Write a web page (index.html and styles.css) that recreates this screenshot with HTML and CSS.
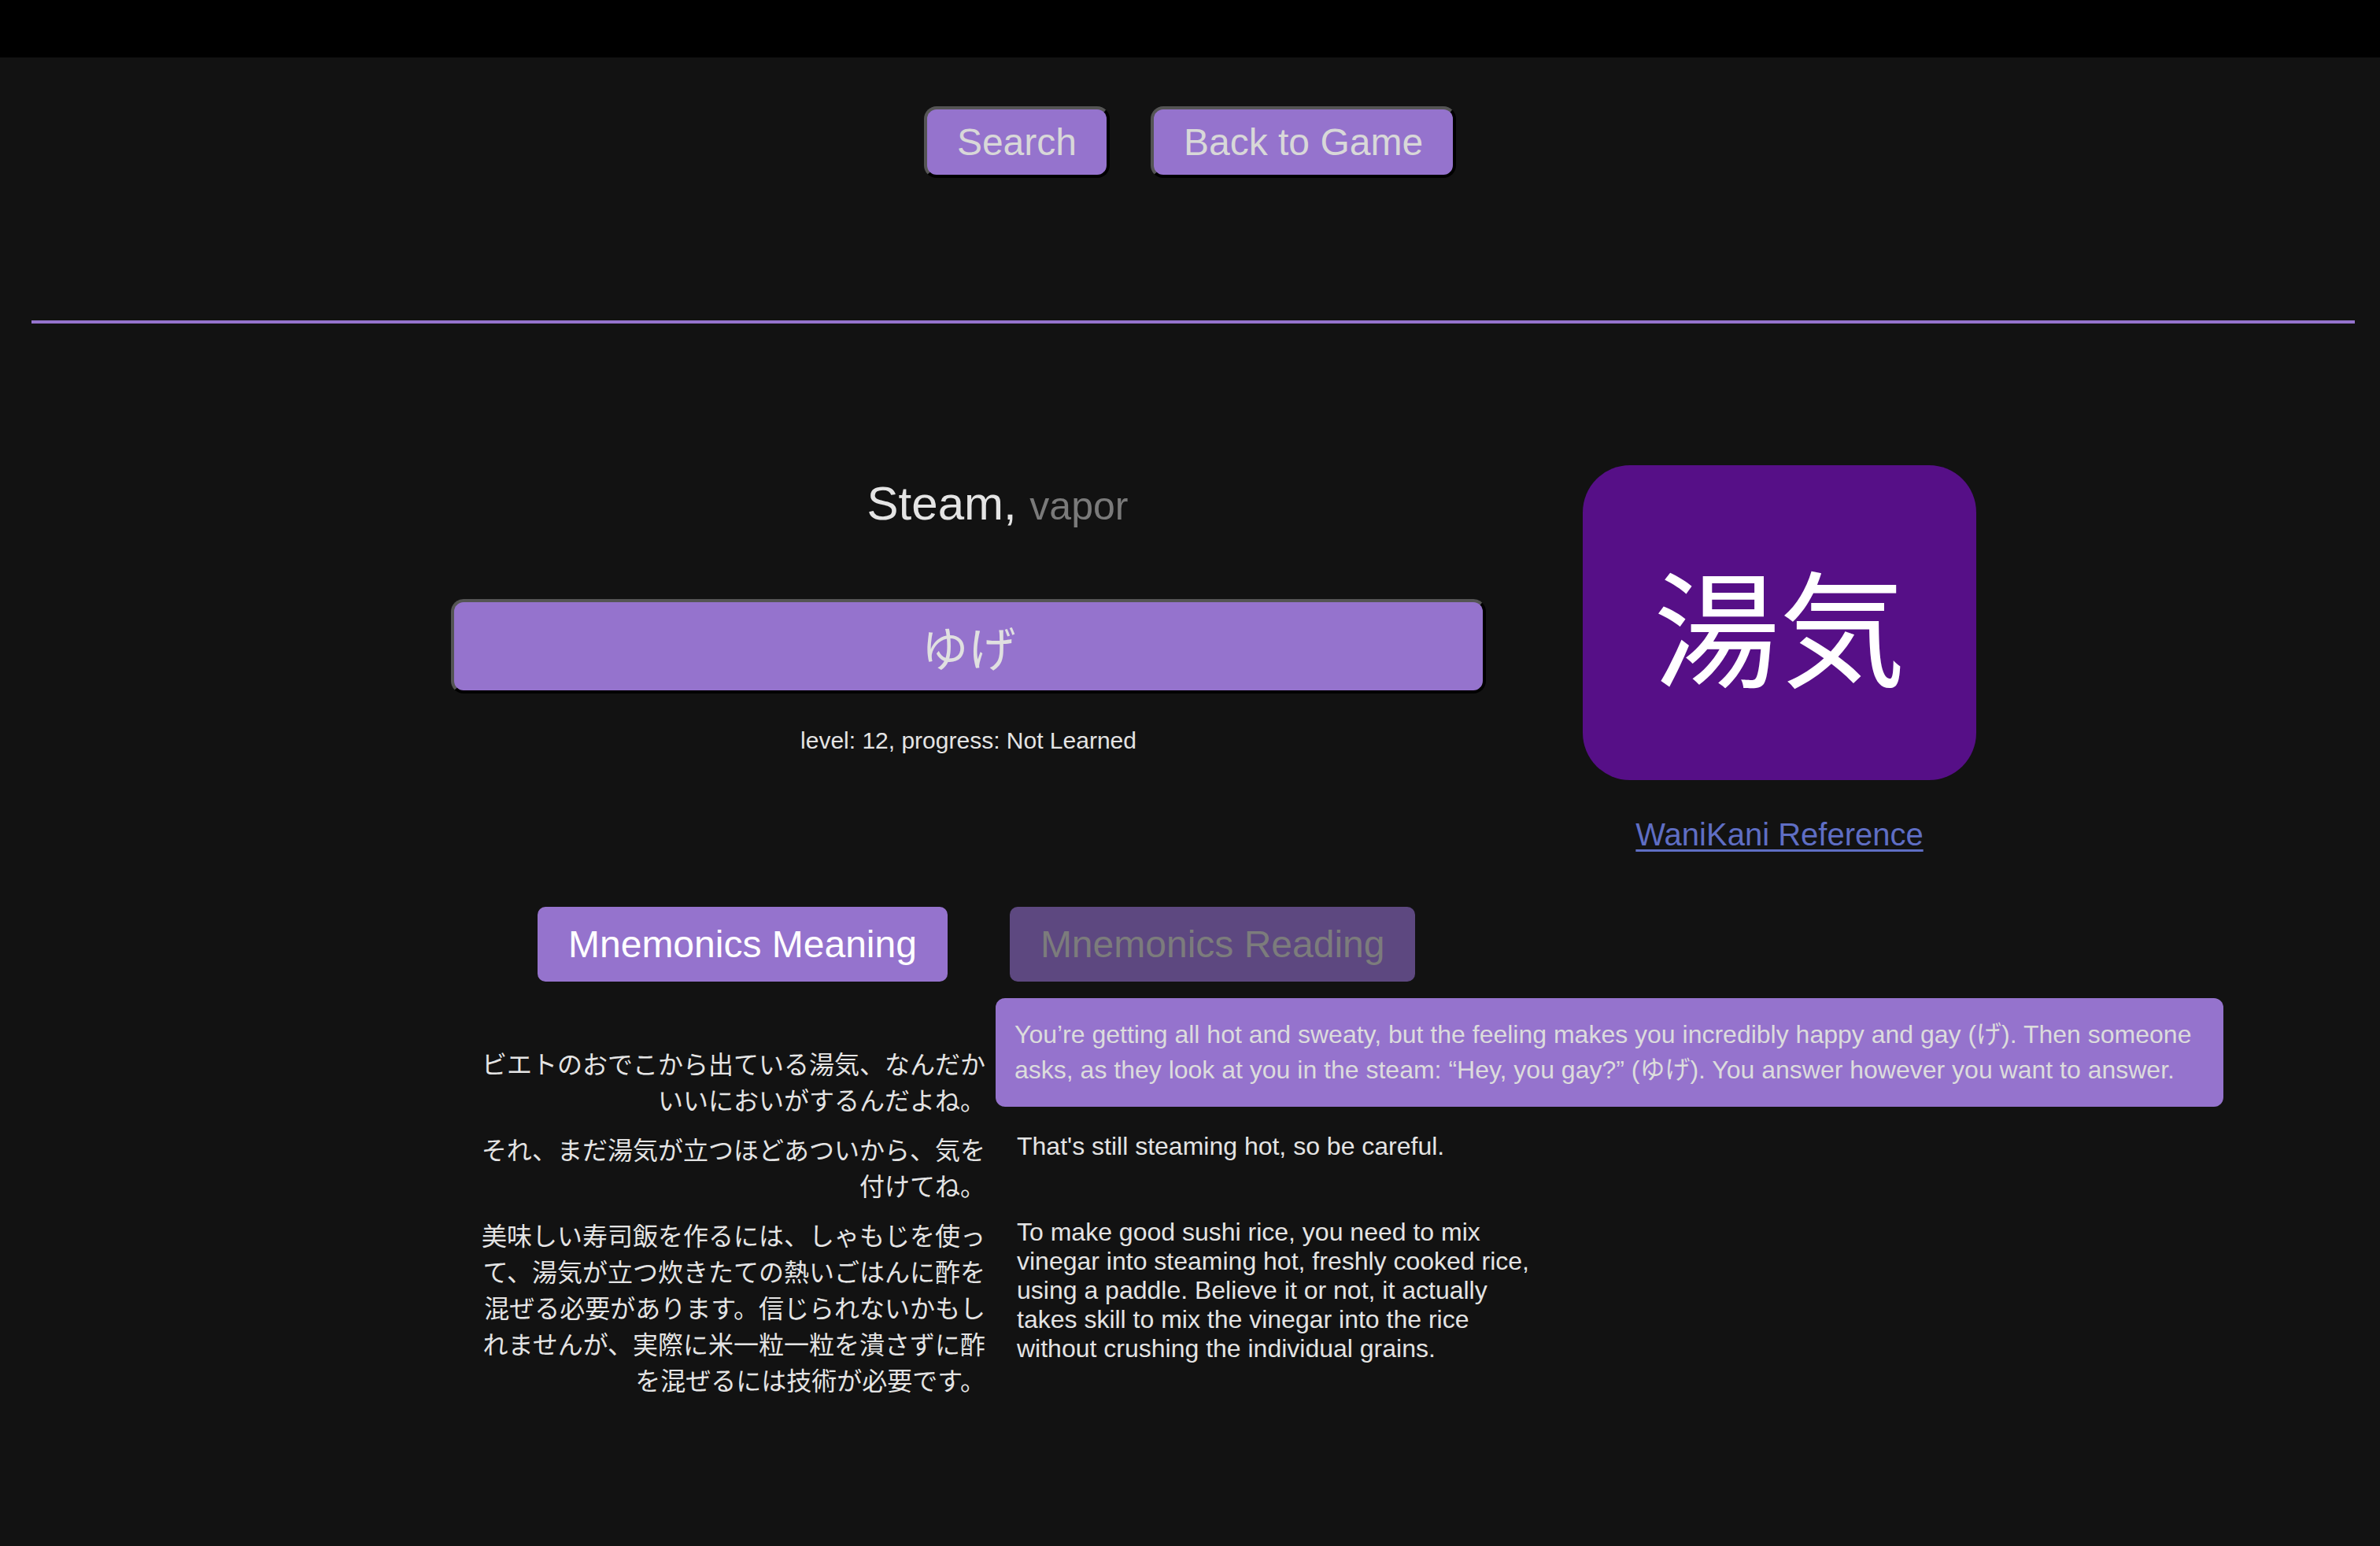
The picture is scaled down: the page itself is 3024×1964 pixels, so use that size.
FILE: index.html
```html
<!DOCTYPE html>
<html lang="ja">
<head>
<meta charset="utf-8">
<title>湯気 - Steam</title>
<link rel="stylesheet" href="styles.css">
</head>
<body>
<header class="topbar"></header>
<nav class="actions">
  <button class="btn">Search</button>
  <button class="btn">Back to Game</button>
</nav>
<hr class="divider">
<main>
  <section class="card-row">
    <div class="word-info">
      <h1 class="meaning">Steam, <span class="alt">vapor</span></h1>
      <div class="reading">ゆげ</div>
      <p class="meta">level: 12, progress: Not Learned</p>
    </div>
    <div class="kanji-col">
      <div class="kanji-box">湯気</div>
      <a class="ref-link" href="#">WaniKani Reference</a>
    </div>
  </section>
  <section class="mnemonics">
    <div class="tabs">
      <button class="tab active">Mnemonics Meaning</button>
      <button class="tab muted">Mnemonics Reading</button>
    </div>
    <div class="popup">You’re getting all hot and sweaty, but the feeling makes you incredibly happy and gay (げ). Then someone asks, as they look at you in the steam: “Hey, you gay?” (ゆげ). You answer however you want to answer.</div>
    <div class="sentences">
      <p class="ja">ビエトのおでこから出ている湯気、なんだかいいにおいがするんだよね。</p>
      <p class="en"></p>
      <p class="ja">それ、まだ湯気が立つほどあついから、気を付けてね。</p>
      <p class="en">That's still steaming hot, so be careful.</p>
      <p class="ja">美味しい寿司飯を作るには、しゃもじを使って、湯気が立つ炊きたての熱いごはんに酢を混ぜる必要があります。信じられないかもしれませんが、実際に米一粒一粒を潰さずに酢を混ぜるには技術が必要です。</p>
      <p class="en">To make good sushi rice, you need to mix vinegar into steaming hot, freshly cooked rice, using a paddle. Believe it or not, it actually takes skill to mix the vinegar into the rice without crushing the individual grains.</p>
    </div>
  </section>
</main>
</body>
</html>
```
FILE: styles.css
```css
html, body {
  margin: 0;
  padding: 0;
}
body {
  background: #121212;
  color: #e2e2e2;
  font-family: "Liberation Sans", Arial, "Noto Sans CJK JP", sans-serif;
  min-height: 1964px;
}
.topbar {
  height: 73px;
  background: #000;
}
.actions {
  display: flex;
  justify-content: center;
  gap: 52px;
  padding-top: 62px;
}
.btn {
  font-family: "Liberation Sans", Arial, sans-serif;
  font-size: 48px;
  line-height: 55px;
  padding: 14px 38px;
  color: #d8d8d8;
  background: #9573cd;
  border: 4px solid;
  border-color: #555 #000 #000 #555;
  border-radius: 16px;
}
.divider {
  margin: 181px 32px 0 40px;
  height: 4px;
  border: 0;
  background: #9573cd;
}
.card-row {
  display: flex;
  align-items: flex-start;
  gap: 123px;
  padding-left: 573px;
  margin-top: 180px;
}
.word-info {
  width: 1315px;
  padding-top: 14px;
}
.meaning {
  margin: 0;
  padding-left: 74px;
  text-align: center;
  font-size: 60px;
  line-height: 69px;
  font-weight: normal;
  color: #e4e4e4;
}
.meaning .alt {
  font-size: 50px;
  color: #7a7a7a;
}
.reading {
  box-sizing: border-box;
  margin-top: 83px;
  width: 1315px;
  height: 120px;
  line-height: 112px;
  text-align: center;
  font-family: "Noto Sans CJK JP", sans-serif;
  font-size: 60px;
  color: #e0e0e0;
  background: #9573cd;
  border: 4px solid;
  border-color: #555 #000 #000 #555;
  border-radius: 16px;
}
.meta {
  margin: 43px 0 0;
  text-align: center;
  font-size: 30px;
  line-height: 34px;
  color: #e4e4e4;
}
.kanji-col {
  width: 500px;
  display: flex;
  flex-direction: column;
  align-items: center;
}
.kanji-box {
  width: 500px;
  height: 400px;
  border-radius: 60px;
  background: #560f87;
  color: #fff;
  display: flex;
  align-items: center;
  justify-content: center;
  font-family: "Noto Sans CJK JP", sans-serif;
  font-size: 160px;
  line-height: 1;
}
.ref-link {
  margin-top: 46px;
  font-size: 40px;
  line-height: 46px;
  color: #5f6ec4;
  text-decoration: underline;
  text-decoration-thickness: 3px;
  text-underline-offset: 5px;
}
.mnemonics {
  position: relative;
  margin-top: 69px;
}
.tabs {
  display: flex;
  gap: 79px;
  padding-left: 683px;
}
.tab {
  font-family: "Liberation Sans", Arial, sans-serif;
  font-size: 48px;
  line-height: 55px;
  padding: 20px 39px;
  border: 0;
  border-radius: 10px;
}
.tab.active {
  background: #9573cd;
  color: #fff;
}
.tab.muted {
  background: #5d4880;
  color: #7c7c7c;
}
.popup {
  position: absolute;
  left: 1265px;
  top: 116px;
  box-sizing: border-box;
  width: 1560px;
  padding: 24px 24px 24px;
  background: #9573cd;
  color: #dcdcdc;
  font-size: 32px;
  line-height: 45px;
  border-radius: 12px;
  z-index: 2;
}
.sentences {
  display: grid;
  grid-template-columns: 660px 660px;
  column-gap: 40px;
  row-gap: 17px;
  padding-left: 592px;
  margin-top: 80px;
}
.sentences p {
  margin: 0;
  font-size: 32px;
}
.sentences .ja {
  text-align: right;
  font-family: "Noto Sans CJK JP", sans-serif;
  line-height: 46px;
  color: #e4e4e4;
}
.sentences .en {
  text-align: left;
  line-height: 37px;
  padding-top: 2px;
  color: #e4e4e4;
}
```
